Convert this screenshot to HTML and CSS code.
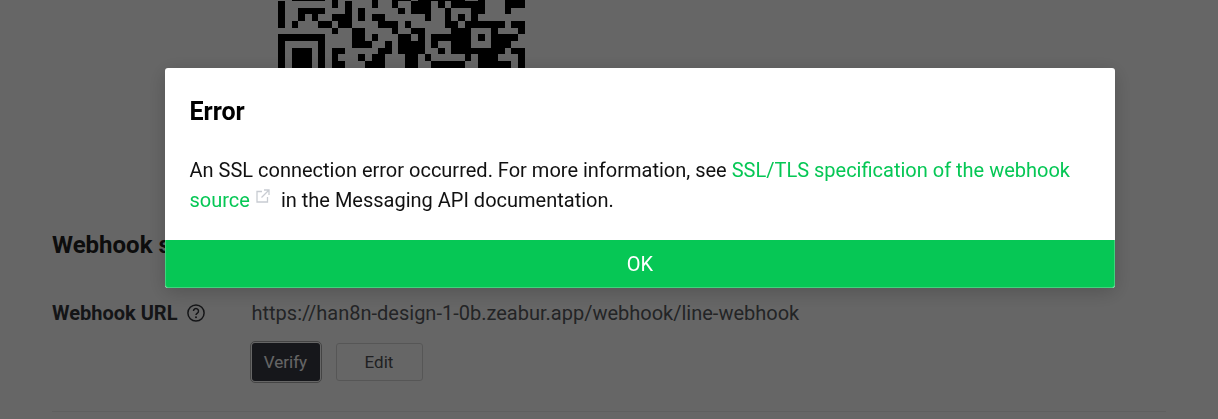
FILE: index.html
```html
<!DOCTYPE html>
<html lang="en">
<head>
<meta charset="utf-8">
<title>Webhook settings</title>
<link rel="stylesheet" href="styles.css">
</head>
<body>
<main class="page">
  <svg class="qr" viewBox="0 24.85 37 11.15" shape-rendering="crispEdges" aria-hidden="true">
    <path d="M2 24h5v1h-5zM8 24h1v1h-1zM14 24h1v1h-1zM17 24h1v1h-1zM18 24h2v1h-2zM21 24h7v1h-7zM30 24h1v1h-1zM34 24h3v1h-3z
    M0 25h1v1h-1zM8 25h1v1h-1zM10 25h1v1h-1zM14 25h1v1h-1zM17 25h1v1h-1zM20 25h3v1h-3zM24 25h1v1h-1zM26 25h5v1h-5zM34 25h3v1h-3z
    M0 26h1v1h-1zM3 26h4v1h-4zM10 26h1v1h-1zM12 26h1v1h-1zM18 26h1v1h-1zM20 26h3v1h-3zM25 26h1v1h-1zM29 26h2v1h-2zM34 26h1v1h-1z
    M0 27h1v1h-1zM3 27h1v1h-1zM5 27h1v1h-1zM8 27h3v1h-3zM12 27h1v1h-1zM14 27h2v1h-2zM22 27h1v1h-1zM25 27h1v1h-1zM27 27h1v1h-1zM29 27h1v1h-1z
    M0 28h1v1h-1zM2 28h1v1h-1zM6 28h2v1h-2zM9 28h2v1h-2zM15 28h3v1h-3zM19 28h1v1h-1zM25 28h2v1h-2zM28 28h6v1h-6zM35 28h2v1h-2z
    M8 29h1v1h-1zM11 29h2v1h-2zM17 29h1v1h-1zM20 29h2v1h-2zM26 29h3v1h-3zM32 29h1v1h-1zM36 29h1v1h-1z
    M0 30h7v1h-7zM11 30h2v1h-2zM14 30h1v1h-1zM18 30h2v1h-2zM21 30h1v1h-1zM23 30h6v1h-6zM30 30h1v1h-1zM32 30h4v1h-4z
    M0 31h1v1h-1zM6 31h1v1h-1zM11 31h3v1h-3zM16 31h1v1h-1zM18 31h4v1h-4zM23 31h1v1h-1zM26 31h3v1h-3zM32 31h3v1h-3z
    M0 32h1v1h-1zM2 32h3v1h-3zM6 32h1v1h-1zM8 32h2v1h-2zM15 32h2v1h-2zM18 32h4v1h-4zM24 32h1v1h-1zM26 32h8v1h-8zM35 32h2v1h-2z
    M0 33h1v1h-1zM2 33h3v1h-3zM6 33h1v1h-1zM8 33h1v1h-1zM12 33h1v1h-1zM14 33h2v1h-2zM19 33h2v1h-2zM22 33h1v1h-1zM28 33h1v1h-1zM30 33h3v1h-3zM36 33h1v1h-1z
    M0 34h1v1h-1zM2 34h3v1h-3zM6 34h1v1h-1zM8 34h2v1h-2zM13 34h3v1h-3zM19 34h2v1h-2zM23 34h5v1h-5zM30 34h5v1h-5zM36 34h1v1h-1z
    M0 35h7v1h-7z"/>
  </svg>
  <h2 class="section-title">Webhook settings</h2>
  <div class="field">
    <div class="field-label">
      <span class="label-text">Webhook URL</span>
      <svg class="help" viewBox="0 0 18 18" aria-hidden="true">
        <circle cx="9" cy="9" r="8.1" fill="none" stroke="currentColor" stroke-width="1.5"/>
        <path d="M6.5 7.1a2.5 2.5 0 1 1 3.9 2c-.9.6-1.4 1-1.4 2" fill="none" stroke="currentColor" stroke-width="1.5"/>
        <circle cx="9" cy="13.2" r="1" fill="currentColor"/>
      </svg>
    </div>
    <div class="field-value">
      <div class="url">https://han8n-design-1-0b.zeabur.app/webhook/line-webhook</div>
      <div class="actions">
        <button class="btn btn-dark" type="button">Verify</button>
        <button class="btn btn-outline" type="button">Edit</button>
      </div>
    </div>
  </div>
  <hr class="divider">
</main>
<div class="overlay">
  <div class="modal" role="dialog">
    <div class="modal-body">
      <h3 class="modal-title">Error</h3>
      <p class="modal-text">An SSL connection error occurred. For more information, see <a class="link" href="#">SSL/TLS specification of the webhook source<svg class="ext" viewBox="0 0 14 14" aria-hidden="true"><path d="M6 2.5H1v10.5h10.5V8" fill="none" stroke="currentColor" stroke-width="1.3"/><path d="M5.5 8.5 12.5 1.5M8 1h5v5" fill="none" stroke="currentColor" stroke-width="1.3"/></svg></a> in the Messaging API documentation.</p>
    </div>
    <button class="modal-ok" type="button">OK</button>
  </div>
</div>
</body>
</html>
```
FILE: styles.css
```css
* { box-sizing: border-box; }
html, body { margin: 0; height: 100%; overflow: hidden; }
body { background: #fff; color: #2a2d35; font-family: Roboto, "Liberation Sans", sans-serif; }
.page { padding: 0 52px; }
.qr { display: block; width: 247px; height: 74.3px; margin-left: 226.3px; fill: #000; }
.section-title { margin: 154px 0 0; height: 34px; font-size: 24px; line-height: 34px; font-weight: 700; color: #222; }
.field { display: flex; margin-top: 36px; }
.field-label { display: flex; align-items: center; width: 199.5px; height: 30px; gap: 9.5px; font-size: 20px; font-weight: 700; color: #34363b; }
.help { width: 18px; height: 18px; color: #34363b; }
.url { height: 30px; font-size: 20px; line-height: 30px; color: #595b60; }
.actions { display: flex; gap: 16px; margin-top: 15px; }
.btn { height: 38px; border-radius: 3px; font-family: inherit; font-size: 17px; }
.btn-dark { width: 68px; padding: 0; background: #393a44; border: 0; color: #fff; outline: 1px solid #aaa; outline-offset: 1px; }
.btn-outline { width: 87px; padding: 0; background: #fff; border: 1px solid #d8d8d8; color: #505256; }
.divider { margin: 30px 0 0; border: 0; border-top: 1px solid #eee; }
.overlay { position: fixed; inset: 0; display: flex; align-items: flex-start; padding: 68px 0 0 165px; background: rgba(0, 0, 0, .6); }
.modal { width: 950px; background: #fff; border-radius: 3px; overflow: hidden; box-shadow: 0 4px 20px rgba(0, 0, 0, .2); }
.modal-body { padding: 28px 24.5px 25px; }
.modal-title { margin: 0 0 27px; font-size: 25px; line-height: 32px; font-weight: 700; color: #000; }
.modal-text { margin: 0; font-size: 20px; line-height: 30px; color: #111; }
.link { color: #06c755; text-decoration: none; }
.ext { width: 14px; height: 14px; margin: 0 6px 0 6px; color: #c8ccd2; vertical-align: 4px; }
.modal-ok { display: block; width: 100%; height: 48px; padding: 0; background: #06c755; border: 1px solid #3fd47c; border-top: 0; border-radius: 0 0 3px 3px; color: #fff; font-family: inherit; font-size: 20px; }
```
